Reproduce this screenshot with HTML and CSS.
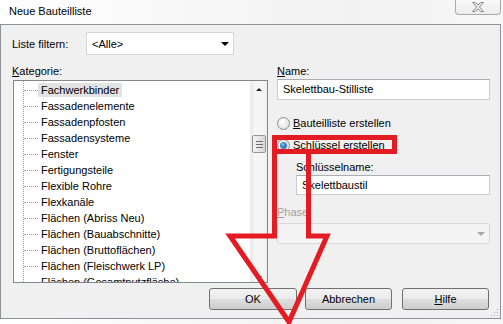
FILE: index.html
```html
<!DOCTYPE html>
<html lang="de">

<head>
    <meta charset="UTF-8">
    <title>Neue Bauteilliste</title>
    <link rel="stylesheet" href="styles.css">
</head>

<body>
    <div class="window">
        <div class="titlebar">
            <span class="title">Neue Bauteilliste</span>
            <div class="close-btn">
                <svg width="12" height="10" viewBox="0 0 12 10">
                    <path d="M0.5 0.5h3l2.5 2.6 2.5-2.6h3l-4 4.5 4 4.5h-3l-2.5-2.6-2.5 2.6h-3l4-4.5z" fill="#eaeaea" stroke="#8c8c8c" stroke-width="1"/>
                </svg>
            </div>
        </div>

        <div class="dialog">
            <div class="main">
                <div class="left-col">
                    <div class="filter-row">
                        <span class="filter-label">Liste filtern:</span>
                        <div class="combo">
                            <span>&lt;Alle&gt;</span>
                            <span class="combo-arrow"></span>
                        </div>
                    </div>
                    <div class="field-label"><u>K</u>ategorie:</div>
                    <div class="listbox">
                        <ul class="tree">
                            <li class="selected"><span>Fachwerkbinder</span></li>
                            <li><span>Fassadenelemente</span></li>
                            <li><span>Fassadenpfosten</span></li>
                            <li><span>Fassadensysteme</span></li>
                            <li><span>Fenster</span></li>
                            <li><span>Fertigungsteile</span></li>
                            <li><span>Flexible Rohre</span></li>
                            <li><span>Flexkanäle</span></li>
                            <li><span>Flächen (Abriss Neu)</span></li>
                            <li><span>Flächen (Bauabschnitte)</span></li>
                            <li><span>Flächen (Bruttoflächen)</span></li>
                            <li><span>Flächen (Fleischwerk LP)</span></li>
                            <li><span>Flächen (Gesamtnutzfläche)</span></li>
                        </ul>
                        <div class="vscroll">
                            <div class="sb-btn"><span class="sb-arrow up"></span></div>
                            <div class="sb-thumb"><i></i><i></i><i></i></div>
                            <div class="sb-btn bottom"><span class="sb-arrow down"></span></div>
                        </div>
                    </div>
                </div>

                <div class="right-col">
                    <div class="field-label"><u>N</u>ame:</div>
                    <div class="textbox">Skelettbau-Stilliste</div>

                    <div class="radio-row first">
                        <span class="radio"></span>
                        <span><u>B</u>auteilliste erstellen</span>
                    </div>
                    <div class="radio-row">
                        <span class="radio checked"></span>
                        <span><u>S</u>chlüssel erstellen</span>
                    </div>

                    <div class="field-label indent key-label">Schlüsselname:</div>
                    <div class="textbox indent">Skelettbaustil</div>

                    <div class="field-label disabled phase-label"><u>P</u>hase:</div>
                    <div class="combo disabled phase-combo">
                        <span></span>
                        <span class="combo-arrow"></span>
                    </div>
                </div>
            </div>

            <div class="buttons">
                <div class="btn ok">OK</div>
                <div class="btn cancel">Abbrechen</div>
                <div class="btn help"><u>H</u>ilfe</div>
            </div>

            <svg class="grip" width="9" height="9" viewBox="0 0 9 9">
                <rect x="7" y="1" width="1" height="1" fill="#b0b0b0"/>
                <rect x="4" y="4" width="1" height="1" fill="#b0b0b0"/>
                <rect x="7" y="4" width="1" height="1" fill="#b0b0b0"/>
                <rect x="1" y="7" width="1" height="1" fill="#b0b0b0"/>
                <rect x="4" y="7" width="1" height="1" fill="#b0b0b0"/>
                <rect x="7" y="7" width="1" height="1" fill="#b0b0b0"/>
            </svg>
        </div>

        <!-- red markup drawn over the dialog -->
        <svg class="markup" width="503" height="324" viewBox="0 0 503 324">
            <rect x="274.5" y="137.5" width="120" height="14" fill="none" stroke="#e31b23" stroke-width="5"/>
            <polyline points="274.5,152 274.5,236 230,236 289,322 327,236 308.5,236 308.5,152" fill="none" stroke="#e31b23" stroke-width="5" stroke-linejoin="miter"/>
        </svg>
    </div>
</body>

</html>
```

FILE: styles.css
```css
* {
    padding: 0;
    margin: 0;
    box-sizing: border-box;
}

body {
    width: 503px;
    height: 324px;
    overflow: hidden;
    font-family: "Liberation Sans", Arial, sans-serif;
    font-size: 11px;
    color: #000;
    background: #fff;
}

.window {
    position: relative;
    width: 503px;
    height: 324px;
    background: linear-gradient(to right, #ffffff 0%, #f6f6f6 45%, #f2f2f2 70%, #f7f7f7 100%);
}

/* title bar */

.titlebar {
    display: flex;
    height: 24px;
}

.title {
    padding: 5px 0 0 9px;
    line-height: 13px;
}

.close-btn {
    margin-left: auto;
    margin-right: 2px;
    width: 46px;
    height: 15px;
    border: 1px solid #a9a9a9;
    border-top: none;
    border-radius: 0 0 4px 4px;
    background: linear-gradient(#fafafa, #ececec);
    display: flex;
    justify-content: center;
    align-items: center;
}

/* dialog body */

.dialog {
    position: relative;
    width: 501px;
    height: 295px;
    border: 1px solid #8e9199;
    background-color: #f0f0f0;
    padding: 7px 10px 0 11px;
}

.main {
    display: flex;
    gap: 9px;
}

.left-col {
    width: 256px;
    display: flex;
    flex-direction: column;
}

.right-col {
    width: 213px;
    display: flex;
    flex-direction: column;
    padding-top: 32px;
}

.field-label {
    line-height: 14px;
    height: 14px;
}

.field-label.disabled {
    color: #a2a2a2;
}

.left-col .field-label {
    margin-top: 9px;
}

.filter-row {
    display: flex;
    align-items: center;
    height: 23px;
}

.filter-label {
    width: 74px;
}

.combo {
    width: 148px;
    height: 23px;
    border: 1px solid #d5d5d5;
    background-color: #fff;
    display: flex;
    align-items: center;
    justify-content: space-between;
    padding: 0 4px 0 5px;
}

.combo-arrow {
    width: 0;
    height: 0;
    border-left: 4px solid transparent;
    border-right: 4px solid transparent;
    border-top: 4px solid #000;
}

.combo.disabled {
    width: 213px;
    height: 21px;
    border-color: #d9d9d9;
    background-color: #f4f4f4;
    border-radius: 2px;
}

.combo.disabled .combo-arrow {
    border-top-color: #a8a8a8;
}

/* category list */

.listbox {
    display: flex;
    margin: 2px 0 0 1px;
    width: 255px;
    height: 203px;
    border: 1px solid #828790;
    background-color: #fff;
    overflow: hidden;
}

.tree {
    position: relative;
    flex: 1;
    list-style: none;
    padding-top: 1px;
}

.tree::before {
    content: "";
    position: absolute;
    left: 9px;
    top: 0;
    bottom: 0;
    border-left: 1px dotted #a0a0a0;
}

.tree li {
    position: relative;
    height: 16px;
    padding: 1px 0 0 24px;
    white-space: nowrap;
}

.tree li::before {
    content: "";
    position: absolute;
    left: 10px;
    top: 8px;
    width: 14px;
    border-top: 1px dotted #a0a0a0;
}

.tree li span {
    display: inline-block;
    height: 14px;
    line-height: 14px;
    padding: 0 3px;
}

.tree li.selected span {
    background-color: #e3e3e3;
}

.vscroll {
    width: 17px;
    display: flex;
    flex-direction: column;
    background: linear-gradient(to right, #e9e9e9, #f5f5f5 20%, #f5f5f5 80%, #ececec);
    border-left: 1px solid #ececec;
}

.sb-btn {
    height: 17px;
    display: flex;
    justify-content: center;
    align-items: center;
}

.sb-btn.bottom {
    margin-top: auto;
    margin-bottom: -4px;
}

.sb-arrow {
    width: 0;
    height: 0;
    border-left: 3px solid transparent;
    border-right: 3px solid transparent;
}

.sb-arrow.up {
    border-bottom: 3px solid #222;
}

.sb-arrow.down {
    border-top: 3px solid #222;
}

.sb-thumb {
    margin: 37px 1px 0 1px;
    height: 18px;
    border: 1px solid #959595;
    border-radius: 2px;
    background: linear-gradient(to right, #f3f3f3, #e6e6e6 50%, #d7d7d7);
    display: flex;
    flex-direction: column;
    justify-content: center;
    align-items: center;
    gap: 2px;
}

.sb-thumb i {
    display: block;
    width: 7px;
    height: 1px;
    background-color: #6e6e6e;
}

/* right column */

.textbox {
    margin-top: 1px;
    height: 21px;
    border: 1px solid #c9ccd1;
    border-top-color: #abadb3;
    background-color: #fff;
    padding: 0 5px;
    line-height: 19px;
}

.indent {
    margin-left: 19px;
}

.key-label {
    margin-top: 7px;
}

.textbox.indent {
    height: 20px;
    line-height: 18px;
}

.radio-row {
    display: flex;
    align-items: center;
    gap: 3px;
    height: 16px;
    margin-top: 6px;
}

.radio-row.first {
    margin-top: 15px;
}

.radio {
    width: 13px;
    height: 13px;
    border-radius: 50%;
    border: 1px solid #8e8f8f;
    background: radial-gradient(circle at 40% 35%, #ffffff, #e2e2e2 70%, #cfcfcf);
    display: flex;
    justify-content: center;
    align-items: center;
}

.radio.checked::after {
    content: "";
    width: 5px;
    height: 5px;
    border-radius: 50%;
    background: radial-gradient(circle at 40% 35%, #8cc7ff, #1b5ea3 70%);
    box-shadow: 0 0 0 1px #3c7fc0;
}

.phase-label {
    margin-top: 10px;
}

.phase-combo {
    margin-top: 4px;
}

/* bottom buttons */

.buttons {
    display: flex;
    justify-content: flex-end;
    margin-top: 5px;
    padding-right: 1px;
}

.btn {
    height: 22px;
    width: 87px;
    border: 1px solid #707070;
    border-radius: 3px;
    background: linear-gradient(#f2f2f2 0%, #ebebeb 48%, #dddddd 52%, #cfcfcf 100%);
    display: flex;
    justify-content: center;
    align-items: center;
}

.btn.ok {
    width: 88px;
}

.btn.cancel {
    margin-left: 8px;
}

.btn.help {
    margin-left: 10px;
}

.grip {
    position: absolute;
    right: 1px;
    bottom: 1px;
}

.markup {
    position: absolute;
    top: 0;
    left: 0;
    pointer-events: none;
}
```
